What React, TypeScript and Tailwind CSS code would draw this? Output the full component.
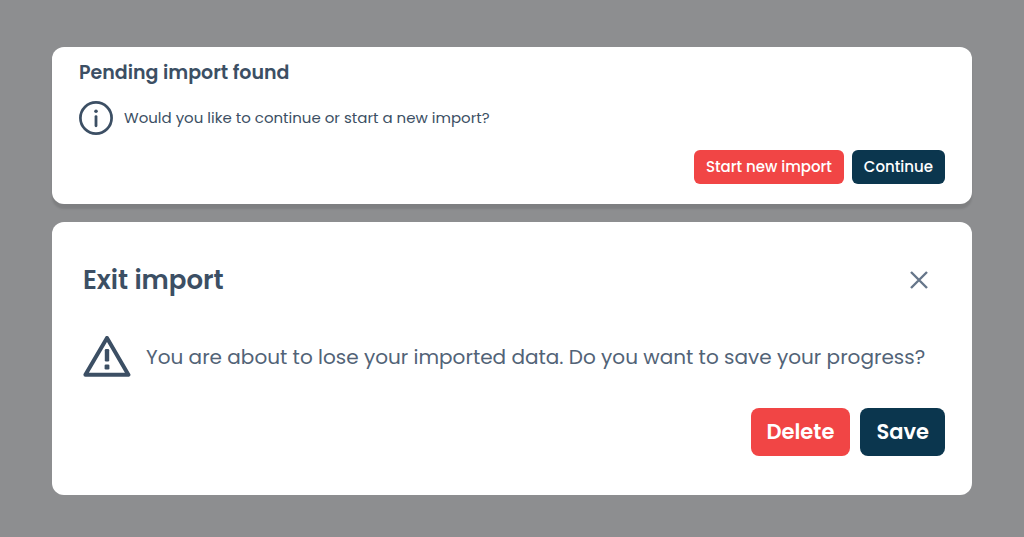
import type { ButtonHTMLAttributes } from "react";

type ButtonProps = ButtonHTMLAttributes<HTMLButtonElement> & {
  variant: "danger" | "primary";
  size: "md" | "lg";
};

const variants = {
  danger: "bg-[#f14545] hover:bg-red-600",
  primary: "bg-[#0b364e] hover:bg-slate-800",
};

const sizes = {
  md: "h-[34px] rounded-md px-3 text-[15px] font-medium",
  lg: "h-12 rounded-lg px-4 text-[21px] font-semibold",
};

function Button({ variant, size, children, ...props }: ButtonProps) {
  return (
    <button
      type="button"
      className={`whitespace-nowrap text-white ${variants[variant]} ${sizes[size]}`}
      {...props}
    >
      {children}
    </button>
  );
}

function InfoIcon() {
  return (
    <svg
      className="h-[34px] w-[34px] shrink-0"
      viewBox="0 0 34 34"
      fill="none"
      aria-hidden="true"
    >
      <circle cx="17" cy="17" r="15.6" stroke="currentColor" strokeWidth="2.7" />
      <circle cx="17" cy="10.2" r="1.8" fill="currentColor" />
      <path
        d="M17 15.6V24.8"
        stroke="currentColor"
        strokeWidth="2.8"
        strokeLinecap="round"
      />
    </svg>
  );
}

function WarningIcon() {
  return (
    <svg
      className="h-[42px] w-12 shrink-0"
      viewBox="0 0 48 42"
      fill="none"
      aria-hidden="true"
    >
      <path
        d="M24 2L45.4 38.8H2.4Z"
        stroke="currentColor"
        strokeWidth="4"
        strokeLinejoin="round"
      />
      <rect x="21.8" y="13" width="4.4" height="12.5" rx="1.2" fill="currentColor" />
      <rect x="21.6" y="28.6" width="4.8" height="4.8" rx="1.2" fill="currentColor" />
    </svg>
  );
}

function CloseIcon() {
  return (
    <svg className="h-5 w-5" viewBox="0 0 20 20" fill="none" aria-hidden="true">
      <path d="M2 2L18 18M18 2L2 18" stroke="currentColor" strokeWidth="2.4" />
    </svg>
  );
}

function PendingImport() {
  return (
    <section className="rounded-xl bg-white px-[27px] pt-3 pb-5 shadow-[0_5px_2px_rgba(0,0,0,0.1)]">
      <h2 className="text-[19px] leading-7 font-semibold">Pending import found</h2>
      <div className="mt-3.5 flex items-center gap-[11px]">
        <InfoIcon />
        <p className="text-[15px] leading-6">
          Would you like to continue or start a new import?
        </p>
      </div>
      <div className="mt-[15px] flex justify-end gap-2">
        <Button variant="danger" size="md">
          Start new import
        </Button>
        <Button variant="primary" size="md">
          Continue
        </Button>
      </div>
    </section>
  );
}

function ExitImport() {
  return (
    <section className="rounded-xl bg-white px-[27px] pt-10 pb-[39px]">
      <div className="flex items-center justify-between pr-4 pl-1">
        <h2 className="text-[26px] leading-9 font-semibold">Exit import</h2>
        <button type="button" aria-label="Close" className="text-[#66768a]">
          <CloseIcon />
        </button>
      </div>
      <div className="mt-[38px] flex items-center gap-[15px] pl-1">
        <WarningIcon />
        <p className="text-xl leading-8 text-[#526377]">
          You are about to lose your imported data. Do you want to save your progress?
        </p>
      </div>
      <div className="mt-[30px] flex justify-end gap-[10px]">
        <Button variant="danger" size="lg">
          Delete
        </Button>
        <Button variant="primary" size="lg">
          Save
        </Button>
      </div>
    </section>
  );
}

export default function App() {
  return (
    <main className="flex min-h-screen flex-col gap-[18px] bg-[#8d8e90] px-[52px] pt-[47px] pb-10 font-[Poppins,sans-serif] text-[#3c4f64]">
      <PendingImport />
      <ExitImport />
    </main>
  );
}
